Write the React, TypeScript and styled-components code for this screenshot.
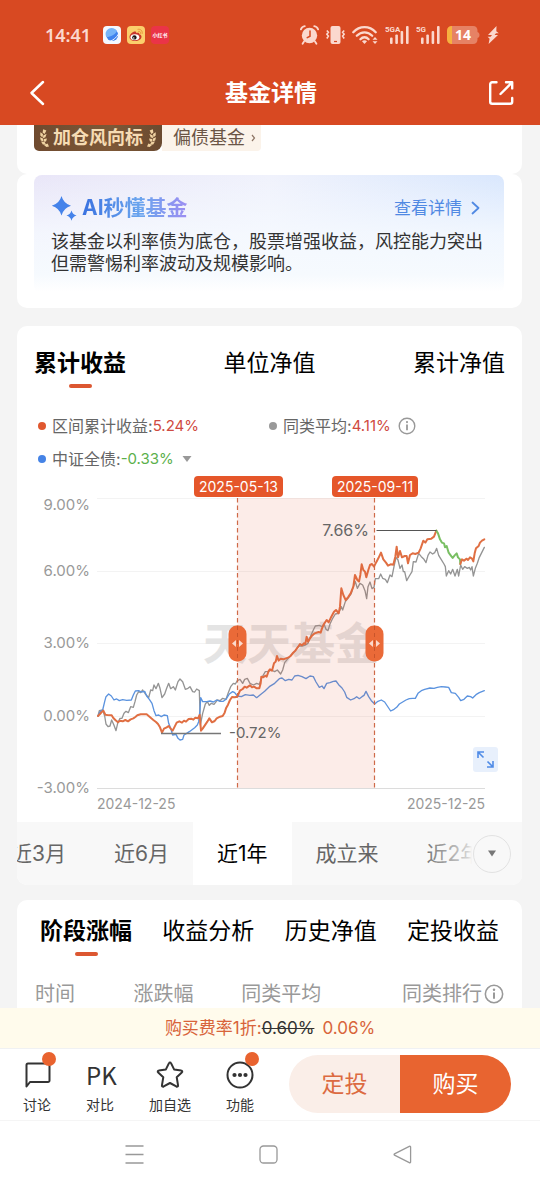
import React from 'react';
import styled, { createGlobalStyle } from 'styled-components';

const GlobalStyle = createGlobalStyle`
  *, *::before, *::after { box-sizing: border-box; }
  body {
    margin: 0;
    background: #f4f4f4;
    font-family: Inter, "Noto Sans CJK SC", sans-serif;
    color: #333;
  }
  button {
    margin: 0;
    padding: 0;
    border: 0;
    background: none;
    font: inherit;
    color: inherit;
    cursor: pointer;
  }
  svg { display: block; flex: none; }
`;

const Screen = styled.div`
  display: flex;
  flex-direction: column;
  min-height: 100vh;
`;

/* ---------- header ---------- */

const Header = styled.header`
  background: #d84922;
  color: #fff;
`;

const StatusBar = styled.div`
  display: flex;
  align-items: center;
  justify-content: space-between;
  height: 60px;
  padding: 10px 41px 0 45px;
  color: #fbd8ce;
`;

const StatusGroup = styled.div<{ $gap: number }>`
  display: flex;
  align-items: center;
  gap: ${(p) => p.$gap}px;
`;

const Clock = styled.span`
  margin-right: 6px;
  font: 600 18px/24px "Noto Sans", sans-serif;
`;

const TitleBar = styled.div`
  display: flex;
  align-items: center;
  justify-content: space-between;
  height: 65px;
  padding: 0 26px 0 28px;
`;

const Title = styled.h1`
  margin: 0;
  font-size: 23px;
  line-height: 34px;
  font-weight: 700;
`;

/* ---------- cards ---------- */

const Content = styled.main`
  flex: 1;
  padding: 0 18px 0 17px;
`;

const Card = styled.section<{ $radius?: string; $gap?: number }>`
  background: #fff;
  border-radius: ${(p) => p.$radius ?? '10px'};
  margin-bottom: ${(p) => p.$gap ?? 0}px;
  overflow: hidden;
`;

const TagRow = styled.div`
  display: flex;
  height: 49px;
  padding: 0 17px;
`;

const BrownTag = styled.span`
  display: flex;
  align-items: center;
  justify-content: center;
  gap: 4px;
  width: 128px;
  height: 26px;
  border-radius: 0 0 8px 5px;
  background: linear-gradient(90deg, #6f4a2f, #7d5837 60%, #6a4a30);
  color: #f6dcb4;
  font-size: 18px;
  line-height: 26px;
  font-weight: 700;
`;

const PaleTag = styled.a`
  display: flex;
  align-items: center;
  gap: 6px;
  height: 26px;
  padding: 0 5px 0 11px;
  border-radius: 0 0 4px 0;
  background: #fbf3ea;
  color: #6b5546;
  font-size: 18px;
  line-height: 26px;
  text-decoration: none;
`;

const AiPanel = styled.div`
  margin: 1px 18px 16px 17px;
  padding: 19px 17px 17px;
  border-radius: 8px;
  background:
    linear-gradient(180deg, rgba(255, 255, 255, 0) 0%, rgba(246, 250, 255, 0.8) 50%, #f6fafe 85%, #fff 100%),
    linear-gradient(90deg, #e9e6f8 0%, #f0f2fc 50%, #d9e7fd 100%);
`;

const AiHead = styled.div`
  display: flex;
  align-items: center;
  height: 28px;
  margin-bottom: 9px;
  padding-right: 5px;
`;

const AiTitle = styled.h2`
  flex: 1;
  margin: 0 0 0 5px;
  font-size: 21px;
  line-height: 28px;
  font-weight: 700;

  span {
    background: linear-gradient(90deg, #3a72e0, #6ba5ee 55%, #9d8df2);
    background-clip: text;
    -webkit-background-clip: text;
    color: transparent;
  }
`;

const DetailLink = styled.a`
  display: flex;
  align-items: center;
  gap: 8px;
  color: #5089e3;
  font-size: 17px;
  line-height: 28px;
  text-decoration: none;
`;

const AiText = styled.p`
  margin: 0;
  color: #333;
  font-size: 18px;
  line-height: 22px;
`;

/* ---------- tabs ---------- */

const Tabs = styled.div<{ $padding: string }>`
  display: flex;
  justify-content: space-between;
  padding: ${(p) => p.$padding};
`;

const Tab = styled.button<{ $active?: boolean }>`
  display: flex;
  flex-direction: column;
  align-items: center;
  gap: 4px;
  color: #000;
  font-size: 23px;
  line-height: 34px;
  font-weight: ${(p) => (p.$active ? 700 : 400)};

  &::after {
    content: '';
    width: 23px;
    height: 4px;
    border-radius: 2px;
    background: ${(p) => (p.$active ? '#dc5731' : 'transparent')};
  }
`;

/* ---------- legend and chart ---------- */

const Legend = styled.div`
  display: grid;
  grid-template-columns: 1fr 1fr;
  grid-auto-rows: 33px;
  align-items: center;
  margin-top: 21px;
  padding: 0 22px 1px 21px;
`;

const LegendItem = styled.div`
  display: flex;
  align-items: center;
  color: #666;
  font-size: 16px;
  line-height: 24px;
`;

const Dot = styled.i<{ $color: string }>`
  width: 8px;
  height: 8px;
  margin-right: 6px;
  border-radius: 50%;
  background: ${(p) => p.$color};
`;

const Figure = styled.span<{ $color: string }>`
  color: ${(p) => p.$color};
  font-size: 15px;
`;

const IconButton = styled.button<{ $left?: number }>`
  display: flex;
  margin-left: ${(p) => p.$left ?? 0}px;
`;

const ChartBox = styled.div`
  position: relative;
`;

const ChartSvg = styled.svg`
  width: 100%;
  height: auto;
`;

const ExpandButton = styled.button`
  position: absolute;
  right: 24px;
  bottom: 50px;
  display: grid;
  place-items: center;
  width: 25px;
  height: 25px;
  border-radius: 3px;
  background: #e8f0fc;
`;

const RangeBar = styled.div`
  position: relative;
  display: flex;
  height: 63px;
  background: #f8f8f8;
  overflow: hidden;
`;

const RangeList = styled.div`
  display: flex;
  margin-left: -30px;
`;

const RangeItem = styled.button<{ $active?: boolean }>`
  flex: none;
  padding: 0 24px;
  background: ${(p) => (p.$active ? '#fff' : 'transparent')};
  color: ${(p) => (p.$active ? '#000' : '#666')};
  font-size: 21px;
  line-height: 32px;
  white-space: nowrap;
`;

const RangeFade = styled.div`
  position: absolute;
  top: 0;
  right: 0;
  display: flex;
  align-items: center;
  justify-content: flex-end;
  width: 104px;
  height: 100%;
  padding-right: 11px;
  background: linear-gradient(90deg, rgba(248, 248, 248, 0), rgba(248, 248, 248, 0.75) 48%, #f8f8f8 52%);
`;

const RoundButton = styled.button`
  display: grid;
  place-items: center;
  width: 38px;
  height: 38px;
  border: 1px solid #e2e2e2;
  border-radius: 50%;
`;

/* ---------- stage table ---------- */

const StageTable = styled.table`
  width: calc(100% - 36px);
  margin: 24px 18px 0;
  border-collapse: collapse;
  table-layout: fixed;
`;

const HeadCell = styled.th<{ $width?: string; $right?: boolean }>`
  width: ${(p) => p.$width ?? 'auto'};
  height: 28px;
  padding: 0;
  color: #999;
  font-size: 20px;
  line-height: 28px;
  font-weight: 400;
  text-align: left;
  white-space: nowrap;

  > div {
    display: flex;
    align-items: center;
    justify-content: flex-end;
    gap: 2px;
  }
`;

/* ---------- bottom ---------- */

const FeeBar = styled.div`
  display: flex;
  justify-content: center;
  height: 40px;
  background: #fffbec;
  color: #d8643a;
  font-size: 17px;
  line-height: 40px;

  del { color: #333; }
  strong { margin-left: 8px; font-weight: 400; }
`;

const Toolbar = styled.footer`
  display: flex;
  align-items: flex-start;
  gap: 35px;
  height: 72px;
  padding: 0 29px 0 23px;
  border-top: 1px solid #f0f1f3;
  background: #fff;
`;

const ToolButton = styled.button`
  position: relative;
  display: flex;
  flex-direction: column;
  align-items: center;
  gap: 6px;
  padding-top: 12px;
  font-size: 14px;
  line-height: 20px;
  white-space: nowrap;
`;

const IconSlot = styled.span`
  display: grid;
  place-items: center;
  width: 28px;
  height: 28px;
`;

const PkMark = styled.span`
  font: 400 24px/28px "Noto Sans CJK SC", sans-serif;
`;

const Badge = styled.i`
  position: absolute;
  top: 3px;
  right: -5px;
  width: 14px;
  height: 14px;
  border-radius: 50%;
  background: #e9632f;
`;

const Pill = styled.div`
  display: flex;
  flex: 1;
  height: 58px;
  margin-top: 6px;
  border-radius: 29px;
  overflow: hidden;
`;

const PillButton = styled.button<{ $primary?: boolean }>`
  flex: 1;
  background: ${(p) => (p.$primary ? '#e86430' : '#faeee8')};
  color: ${(p) => (p.$primary ? '#fff' : '#dc6a41')};
  font-size: 23px;
  line-height: 34px;
`;

const SystemNav = styled.nav`
  display: flex;
  align-items: center;
  justify-content: center;
  gap: 115px;
  height: 67px;
  padding-right: 4px;
  border-top: 1px solid #f5f5f5;
  background: #fff;
`;

/* ---------- icons ---------- */

const InfoIcon = ({ size }: { size: number }) => (
  <svg width={size} height={size} viewBox="0 0 18 18" fill="none" stroke="#999" strokeWidth="1.4">
    <circle cx="9" cy="9" r="7.8" />
    <path d="M9 7.6v5.6" strokeWidth="1.8" />
    <circle cx="9" cy="5.1" r="1.1" fill="#999" stroke="none" />
  </svg>
);

const Laurel = ({ flip }: { flip?: boolean }) => (
  <svg width="9" height="18" viewBox="0 0 9 18" fill="#f0d3a2">
    <g transform={flip ? 'translate(9 0) scale(-1 1)' : undefined}>
      <path d="M3.200 0.300 6.400 1.600 4.600 5 2.600 3.400z" />
      <path d="M0.300 3.200 3 5 2.600 8.400 0.300 6.600z" />
      <path d="M3.200 6.600 6.600 4.800 5.400 8.200 3 9.200z" />
      <path d="M0 8.200 3 9.400 3.600 12.400 0.800 11.400z" />
      <path d="M3.800 10 7 9.400 6 12.400 4 12.800z" />
      <path d="M1 12.600 4.600 13 6.200 15.800 2.800 15.400z" />
      <path d="M4 16 7.600 14.600 9 17.400 6.400 18z" />
    </g>
  </svg>
);

const Signal = ({ label }: { label: string }) => (
  <svg width="24" height="20" viewBox="0 0 24 20" fill="currentColor">
    <text x="0" y="7" fontSize="8" fontWeight="700" fontFamily="Roboto, sans-serif">
      {label}
    </text>
    <rect x="5" y="12.5" width="2.6" height="6.5" rx="1" />
    <rect x="10.300" y="9.500" width="2.6" height="9.500" rx="1" />
    <rect x="15.600" y="6" width="2.6" height="13" rx="1" />
    <rect x="21" y="1" width="2.6" height="18" rx="1" />
  </svg>
);

const AppBadges = () => (
  <>
    <svg width="18" height="18" viewBox="0 0 18 18">
      <rect width="18" height="18" rx="4" fill="#f4f8ff" />
      <circle cx="9.2" cy="9" r="6" fill="#3f83ee" />
      <path d="M3.400 11C8 11 12 8.500 14 5a6 6 0 0 0-10.600 6z" fill="#76b4f8" />
      <path d="M6.500 15.500C10 14.500 13.500 11.500 15.500 8" stroke="#f4f8ff" strokeWidth="1" fill="none" />
    </svg>
    <svg width="18" height="18" viewBox="0 0 18 18">
      <rect width="18" height="18" rx="4" fill="#fbcf6c" />
      <path d="M2.500 11c0-3 4-6 6-5.500.8.2.8 1 .6 1.600 2-.8 3.600-.4 3.200 1.200 1 .3 2.200.9 2.200 2.400 0 2.400-3 4.300-6.200 4.300S2.500 13.500 2.500 11z" fill="#c9372c" />
      <ellipse cx="7.900" cy="11.200" rx="4.400" ry="3" fill="#fff" />
      <circle cx="7.400" cy="11.400" r="2.200" fill="#1c1512" />
      <circle cx="6.800" cy="12" r="0.700" fill="#fff" />
      <path d="M11 3.300c2.700-.5 4.700 1.500 4.200 4.200M11.600 5.300c1.400-.2 2.200.8 2 2" stroke="#e8923a" strokeWidth="1" fill="none" strokeLinecap="round" />
    </svg>
    <svg width="18" height="18" viewBox="0 0 18 18">
      <rect width="18" height="18" rx="4" fill="#ea3448" />
      <text x="9" y="11" fontSize="5" fontWeight="700" textAnchor="middle" fill="#fff">小红书</text>
    </svg>
  </>
);

const StatusIcons = () => (
  <>
    <svg width="19" height="20" viewBox="0 0 19 20" fill="currentColor">
      <path d="M0.900 4.400A5 5 0 0 1 4.800 1.200M18.100 4.400A5 5 0 0 0 14.200 1.200" stroke="currentColor" strokeWidth="1.800" fill="none" strokeLinecap="round" />
      <path d="M4 16.500 2.600 18.800M15 16.500l1.400 2.300" stroke="currentColor" strokeWidth="1.800" strokeLinecap="round" />
      <circle cx="9.500" cy="10.500" r="7.700" />
      <path d="M10 6v5.200L7.200 12.600" stroke="#d84922" strokeWidth="1.500" fill="none" strokeLinecap="round" />
    </svg>
    <svg width="19" height="20" viewBox="0 0 19 20" fill="none" stroke="currentColor" strokeWidth="1.600">
      <rect x="4.500" y="1" width="10" height="18" rx="2" fill="currentColor" stroke="none" />
      <path d="M8 16.500h3" stroke="#d84922" strokeWidth="1.200" />
      <path d="M0.800 5.500 2.400 7.300.8 9.200l1.600 1.900L.8 13.500M18.200 5.500l-1.600 1.800 1.600 1.900-1.600 1.900 1.600 2.400" />
    </svg>
    <svg width="26" height="20" viewBox="0 0 26 20" fill="none" stroke="currentColor" strokeWidth="2.300" strokeLinecap="round">
      <path d="M1.300 7.200C7.500.4 17.500.4 23.700 7.200" />
      <path d="M4.800 10.800C9.300 6.200 15.700 6.200 20.200 10.800" />
      <path d="M8.400 14.200c2.500-2.600 5.700-2.600 8.200 0" />
      <path d="M10 16.300c1.500-1.500 3.500-1.500 5 0L12.500 19z" fill="currentColor" stroke="none" />
      <path d="M20.500 14.800 23 12l2.500 2.800zM20.500 16.200 23 19l2.500-2.800z" fill="currentColor" stroke="none" />
    </svg>
    <Signal label="5GA" />
    <Signal label="5G" />
    <svg width="33" height="18" viewBox="0 0 33 18">
      <path d="M5 0h21c3 0 4.500 2 4.500 4.500v1.500c1.500.5 2 1.500 2 3s-.5 2.500-2 3v1.500c0 2.500-1.500 4.500-4.500 4.500H5z" fill="#e68265" />
      <path d="M5 0v18H4.500A4.500 4.500 0 0 1 0 13.500v-9A4.500 4.500 0 0 1 4.500 0z" fill="#f7b13f" />
      <text x="16" y="14" fontFamily="Noto Sans, sans-serif" fontSize="14" fontWeight="700" textAnchor="middle" fill="#fff">14</text>
    </svg>
    <svg width="12" height="20" viewBox="0 0 12 20" fill="currentColor">
      <path d="M9.500 1 1 10h4L3.600 11.800H0.600L2.600 13.800 1.600 19 11 10H7.600L9 8.200h2.800L9.300 6.200z" />
    </svg>
  </>
);

/* ---------- chart ---------- */

const FUND_RISE =
  '234,738 240,732 245,726 250,722 256,734 262,735 275,736 280,744 286,750 294,757 300,752 308,754 316,750 324,754 332,748 340,745 346,741 352,736 362,733 380,733 386,738 394,745 400,750 408,756 414,762 420,772 426,788 432,776 440,772 446,768 452,776 458,782 464,770 470,758 478,754 486,758 492,752 498,755 506,747 514,746 520,749 526,743 534,745 539,735 543,782 548,776 556,764 562,755 568,745 576,757 584,753 590,745 600,740 608,738 614,728 618,715 624,704 630,690 636,681 644,682 652,680 ' +
  '660,662 668,657 674,650 680,653 690,646 696,652 702,650 710,655 718,655 722,640 724,620 730,622 736,617 740,620 746,603 750,598 756,602 762,580 767,575 771,558 776,572 782,566 790,568 806,562 812,558 818,550 826,542 836,528 840,522 846,526 852,520 856,522 860,500 864,515 870,505 876,497 884,490 896,486 902,488 906,475 912,462 920,450 926,457 934,440 942,425 948,420 956,430 960,410 964,355 970,375 977,390 984,382 992,370 1000,350 1005,315 1012,330 1017,335 1021,315 1025,283 1030,300 1035,305 1039,322 1045,300 1050,285 1056,282 1062,290 1068,278 1075,265 1083,248 1090,268 1098,278 1104,287 1112,283 1120,284 1126,260 1130,230 1134,262 1140,243 1146,262 1154,258 1160,258 1164,280 1170,255 1178,250 1186,252 1196,248 1202,235 1210,212 1216,218 1222,208 1234,206 1242,200 1249,182';
const FUND_DRAWDOWN =
  '1249,182 1254,190 1260,208 1266,218 1272,220 1275,232 1280,228 1286,248 1292,256 1298,264 1304,256 1310,250 1314,262 1320,268 1321,282';
const FUND_RECOVERY =
  '1321,282 1326,268 1332,272 1340,266 1344,270 1350,262 1356,266 1360,274 1364,250 1368,235 1376,228 1380,218 1386,212 1393,208';
const PEERS =
  '234,738 238,722 248,720 254,738 258,762 264,770 270,768 275,750 282,766 288,782 293,760 300,745 306,745 312,730 318,724 325,728 332,710 340,712 345,695 350,675 356,665 362,668 368,660 376,672 386,683 392,660 398,662 402,645 408,656 415,640 420,655 426,683 434,672 440,655 446,640 452,656 460,650 466,660 474,635 480,627 488,635 496,658 504,655 510,650 518,665 524,666 530,657 538,662 541,765 548,730 556,702 562,695 568,706 574,700 582,703 592,690 600,692 608,685 618,688 626,665 632,650 640,640 646,642 652,632 ' +
  '660,628 668,640 674,628 682,625 690,640 700,645 710,640 718,643 726,622 736,605 746,604 754,600 764,605 772,600 782,612 788,600 794,578 802,568 812,556 826,542 836,528 846,528 854,526 864,520 872,498 880,480 886,468 898,466 906,470 912,462 918,478 924,482 930,462 938,445 946,432 956,430 964,410 968,420 976,395 984,385 994,370 1000,350 1006,335 1012,355 1020,340 1028,345 1035,362 1040,386 1044,350 1050,336 1056,356 1062,352 1066,326 1076,326 1082,312 1088,325 1096,328 1102,338 1110,315 1116,320 1122,290 1128,262 1134,270 1140,295 1146,285 1150,305 1154,305 1160,332 1168,318 1176,305 1180,275 1188,276 1196,250 1204,260 1212,268 1218,278 1224,256 1230,246 1238,252 1244,248 1250,235 1256,256 1262,266 1272,282 1276,290 1279,318 1286,302 1292,312 1298,298 1305,318 1312,298 1316,318 1322,285 1328,298 1334,290 1342,295 1348,292 1352,300 1356,290 1360,318 1366,295 1372,280 1378,262 1384,250 1393,232';
const BOND_INDEX =
  '234,738 240,725 248,720 254,695 258,680 266,672 274,678 282,690 290,687 298,692 308,689 320,691 334,690 340,675 346,663 356,662 364,666 374,664 380,678 388,688 396,700 402,722 408,737 416,735 424,740 432,735 442,737 446,760 452,775 458,795 468,793 474,805 480,810 488,808 492,795 500,790 508,785 516,779 524,773 532,765 536,755 540,720 542,683 548,695 560,695 570,693 580,696 590,690 600,694 610,694 618,688 628,672 638,665 644,668 652,678 ' +
  '664,680 676,674 690,676 700,675 710,683 720,675 734,664 748,650 764,640 778,626 786,624 796,632 806,628 816,630 824,618 834,616 846,620 858,626 870,618 880,620 888,636 898,652 906,648 912,656 920,640 930,638 940,634 948,633 956,644 966,654 974,666 980,682 992,690 1002,686 1010,680 1018,686 1026,680 1032,676 1038,664 1046,680 1054,692 1064,702 1072,695 1084,690 1094,696 1102,708 1112,723 1122,718 1130,712 1138,702 1148,696 1158,690 1168,686 1178,685 1186,685 1194,670 1204,662 1214,658 1230,654 1242,655 1252,652 1264,650 1276,651 1286,652 1294,668 1306,670 1316,682 1322,692 1332,688 1342,678 1352,680 1358,684 1368,674 1378,668 1393,662';

const AXIS = [
  { label: '9.00%', line: 22, text: 34 },
  { label: '6.00%', line: 95, text: 100 },
  { label: '3.00%', line: 167, text: 172 },
  { label: '0.00%', line: 240, text: 245 },
  { label: '-3.00%', line: 312, text: 317 },
];

const Handle = ({ x }: { x: number }) => (
  <g>
    <rect x={x - 9} y="149.5" width="18" height="36" rx="8.5" fill="#ea6a38" />
    <path d={`M${x} 150v35`} stroke="#c9552b" strokeDasharray="4 3" />
    <path d={`M${x - 1.5} 164v7l-4-3.500zM${x + 1.5} 164v7l4-3.500z`} fill="#fbd9cb" />
  </g>
);

const Flag = ({ x, width, date }: { x: number; width: number; date: string }) => (
  <g>
    <rect x={x} y="0" width={width} height="21" rx="4" fill="#e5562a" />
    <text x={x + width / 2} y="16" fontSize="14" textAnchor="middle" fill="#fff">{date}</text>
  </g>
);

const Chart = () => (
  <ChartSvg viewBox="0 0 505 346" role="img" aria-label="累计收益走势">
    {AXIS.map((a) => (
      <g key={a.label}>
        <path d={`M80 ${a.line}.500H468`} stroke={a.line === 312 ? '#dcdcdc' : '#f3f3f3'} />
        <text x="73" y={a.text} fontSize="15" textAnchor="end" fill="#999">{a.label}</text>
      </g>
    ))}
    <text x="186" y="184" fontSize="44" fontWeight="700" fill="#e4e4e4">天天基金</text>
    <g transform="translate(3 -6) scale(0.33333)" fill="none" strokeLinejoin="round" strokeLinecap="round">
      <polyline points={PEERS} stroke="#949494" strokeWidth="4" />
      <polyline points={BOND_INDEX} stroke="#5b93df" strokeWidth="4" />
      <polyline points={FUND_RISE} stroke="#e06f43" strokeWidth="6" />
      <polyline points={FUND_DRAWDOWN} stroke="#79bf63" strokeWidth="6" />
      <polyline points={FUND_RECOVERY} stroke="#e06f43" strokeWidth="6" />
    </g>
    <rect x="220.500" y="22" width="137" height="290" fill="#e5562a" opacity="0.11" />
    <path d="M220.500 22V312M357.500 22V312" stroke="#cf6a48" strokeWidth="1.200" strokeDasharray="4.500 3" />
    <path d="M144 257.500h60" stroke="#777" strokeWidth="1.600" />
    <path d="M359.500 54.500h60" stroke="#555" strokeWidth="1.200" />
    <text x="212" y="262" fontSize="15" fill="#666">-0.72%</text>
    <text x="352" y="60" fontSize="16" textAnchor="end" fill="#666">7.66%</text>
    <Handle x={220.5} />
    <Handle x={357.5} />
    <Flag x={177} width={89} date="2025-05-13" />
    <Flag x={315} width={86} date="2025-09-11" />
    <text x="80" y="333" fontSize="14" fill="#999">2024-12-25</text>
    <text x="468" y="333" fontSize="14" textAnchor="end" fill="#999">2025-12-25</text>
  </ChartSvg>
);

/* ---------- page ---------- */

export default function App() {
  return (
    <Screen>
      <GlobalStyle />
      <Header>
        <StatusBar>
          <StatusGroup $gap={6}>
            <Clock>14:41</Clock>
            <AppBadges />
          </StatusGroup>
          <StatusGroup $gap={7}>
            <StatusIcons />
          </StatusGroup>
        </StatusBar>
        <TitleBar>
          <button aria-label="返回">
            <svg width="26" height="26" viewBox="0 0 26 26" fill="none" stroke="#fff" strokeWidth="2.500" strokeLinecap="round" strokeLinejoin="round">
              <path d="M15 2 3.500 13 15 24" />
            </svg>
          </button>
          <Title>基金详情</Title>
          <button aria-label="分享">
            <svg width="26" height="26" viewBox="0 0 26 26" fill="none" stroke="#fff" strokeWidth="2.400" strokeLinecap="round" strokeLinejoin="round">
              <path d="M8.500 2.200H4.200a2 2 0 0 0-2 2v17.600a2 2 0 0 0 2 2h18a2 2 0 0 0 2-2V18" />
              <path d="M12.500 14 24 2.500M18 2.200h6.200v6.200" />
            </svg>
          </button>
        </TitleBar>
      </Header>

      <Content>
        <Card $radius="0 0 10px 10px">
          <TagRow>
            <BrownTag>
              <Laurel />
              加仓风向标
              <Laurel flip />
            </BrownTag>
            <PaleTag href="#bond">
              偏债基金
              <svg width="5" height="8" viewBox="0 0 5 8" fill="none" stroke="#8d7565" strokeWidth="1.200">
                <path d="M1 1l2.500 3L1 7" />
              </svg>
            </PaleTag>
          </TagRow>
        </Card>

        <Card $gap={18}>
          <AiPanel>
            <AiHead>
              <svg width="26" height="26" viewBox="0 0 26 26" fill="#4583ea">
                <path d="M10.500 1Q12.500 8.500 20 10.700 12.500 13 10.500 20.500 8.500 13 .8 10.700 8.500 8.500 10.500 1z" />
                <path d="M20.500 15.500Q21.500 19.500 25.500 20.500 21.500 21.700 20.500 25.700 19.500 21.700 15.500 20.500 19.500 19.500 20.500 15.500z" />
              </svg>
              <AiTitle><span>AI秒懂基金</span></AiTitle>
              <DetailLink href="#ai">
                查看详情
                <svg width="12" height="14" viewBox="0 0 12 14" fill="none" stroke="#5089e3" strokeWidth="1.800" strokeLinecap="round" strokeLinejoin="round">
                  <path d="M2.500 1.500 8.500 7 2.500 12.500" />
                </svg>
              </DetailLink>
            </AiHead>
            <AiText>该基金以利率债为底仓，股票增强收益，风控能力突出但需警惕利率波动及规模影响。</AiText>
          </AiPanel>
        </Card>

        <Card $gap={15}>
          <Tabs $padding="20px 17px 0">
            <Tab $active>累计收益</Tab>
            <Tab>单位净值</Tab>
            <Tab>累计净值</Tab>
          </Tabs>
          <Legend>
            <LegendItem>
              <Dot $color="#e0582f" />
              区间累计收益:<Figure $color="#cf4a41">5.24%</Figure>
            </LegendItem>
            <LegendItem>
              <Dot $color="#999" />
              同类平均:<Figure $color="#cf4a41">4.11%</Figure>
              <IconButton $left={7} aria-label="同类平均说明"><InfoIcon size={18} /></IconButton>
            </LegendItem>
            <LegendItem>
              <Dot $color="#4583e6" />
              中证全债:<Figure $color="#5bb04b">-0.33%</Figure>
              <IconButton $left={8} aria-label="切换对比指数">
                <svg width="10" height="6" viewBox="0 0 10 6" fill="#999"><path d="M0.500 0h9L5 6z" /></svg>
              </IconButton>
            </LegendItem>
          </Legend>
          <ChartBox>
            <Chart />
            <ExpandButton aria-label="全屏查看">
              <svg width="19" height="19" viewBox="0 0 19 19" fill="none" stroke="#4f8be6" strokeWidth="1.600">
                <path d="M8 2H2v6M2 2l5.500 5.500M11 17h6v-6M17 17l-5.500-5.500" />
              </svg>
            </ExpandButton>
          </ChartBox>
          <RangeBar>
            <RangeList>
              <RangeItem>近3月</RangeItem>
              <RangeItem>近6月</RangeItem>
              <RangeItem $active>近1年</RangeItem>
              <RangeItem>成立来</RangeItem>
              <RangeItem>近2年</RangeItem>
            </RangeList>
            <RangeFade>
              <RoundButton aria-label="更多区间">
                <svg width="10" height="7" viewBox="0 0 10 7" fill="#777"><path d="M1 .5h8L5 6.500z" /></svg>
              </RoundButton>
            </RangeFade>
          </RangeBar>
        </Card>

        <Card $radius="10px 10px 0 0">
          <Tabs $padding="14px 23px 0">
            <Tab $active>阶段涨幅</Tab>
            <Tab>收益分析</Tab>
            <Tab>历史净值</Tab>
            <Tab>定投收益</Tab>
          </Tabs>
          <StageTable>
            <thead>
              <tr>
                <HeadCell $width="21%">时间</HeadCell>
                <HeadCell $width="23%">涨跌幅</HeadCell>
                <HeadCell>同类平均</HeadCell>
                <HeadCell>
                  <div>
                    同类排行
                    <IconButton aria-label="同类排行说明"><InfoIcon size={20} /></IconButton>
                  </div>
                </HeadCell>
              </tr>
            </thead>
          </StageTable>
        </Card>
      </Content>

      <FeeBar>
        购买费率1折:<del>0.60%</del><strong>0.06%</strong>
      </FeeBar>
      <Toolbar>
        <ToolButton>
          <IconSlot>
            <svg width="28" height="28" viewBox="0 0 28 28" fill="none" stroke="#333" strokeWidth="2" strokeLinejoin="round">
              <path d="M3.500 25.500V4A1.500 1.500 0 0 1 5 2.500h20A1.500 1.500 0 0 1 26.500 4v15.500A1.500 1.500 0 0 1 25 21H7z" />
            </svg>
          </IconSlot>
          讨论
          <Badge />
        </ToolButton>
        <ToolButton>
          <IconSlot><PkMark>PK</PkMark></IconSlot>
          对比
        </ToolButton>
        <ToolButton>
          <IconSlot>
            <svg width="28" height="28" viewBox="0 0 28 28" fill="none" stroke="#333" strokeWidth="2" strokeLinejoin="round">
              <path d="M13 2.100a1.100 1.100 0 0 1 2 0l3.100 6.300 7.100 1a1.100 1.100 0 0 1 .6 2l-5.100 4.800 1.300 7.900a1.100 1.100 0 0 1-1.700 1.300L14 22l-6.300 3.400A1.100 1.100 0 0 1 6 24.100l1.300-7.900-5.100-4.800a1.100 1.100 0 0 1 .6-2l7.100-1z" />
            </svg>
          </IconSlot>
          加自选
        </ToolButton>
        <ToolButton>
          <IconSlot>
            <svg width="28" height="28" viewBox="0 0 28 28" fill="none" stroke="#333" strokeWidth="2">
              <circle cx="14" cy="14" r="12.500" />
              <g fill="#333" stroke="none">
                <circle cx="8.500" cy="14" r="2.100" />
                <circle cx="14" cy="14" r="2.100" />
                <circle cx="19.500" cy="14" r="2.100" />
              </g>
            </svg>
          </IconSlot>
          功能
          <Badge />
        </ToolButton>
        <Pill>
          <PillButton>定投</PillButton>
          <PillButton $primary>购买</PillButton>
        </Pill>
      </Toolbar>
      <SystemNav>
        <button aria-label="最近任务">
          <svg width="19" height="19" viewBox="0 0 19 19" stroke="#999" strokeWidth="1.500">
            <path d="M0.500 1h18M0.500 9.500h18M0.500 18h18" />
          </svg>
        </button>
        <button aria-label="主屏幕">
          <svg width="19" height="19" viewBox="0 0 19 19" fill="none" stroke="#999" strokeWidth="1.300">
            <rect x="1" y="1" width="17" height="17" rx="3.500" />
          </svg>
        </button>
        <button aria-label="返回上一级">
          <svg width="19" height="19" viewBox="0 0 19 19" fill="none" stroke="#999" strokeWidth="1.300" strokeLinejoin="round">
            <path d="M16.300 1.300 1.500 8.800a.8.8 0 0 0 0 1.400l14.800 7.500a.9.900 0 0 0 1.300-.8V2.100a.9.900 0 0 0-1.300-.8z" />
          </svg>
        </button>
      </SystemNav>
    </Screen>
  );
}
